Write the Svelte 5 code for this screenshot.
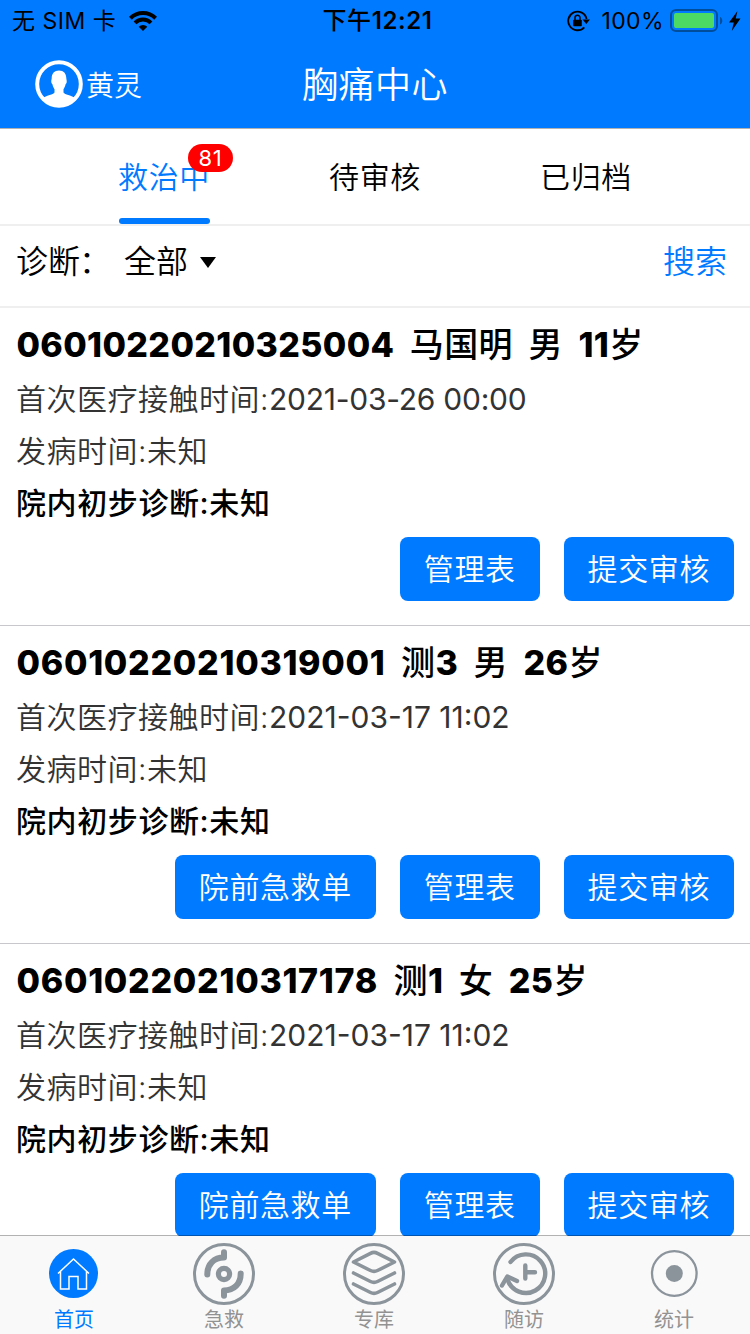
<script lang="ts">
    type Patient = {
        id: string;
        idSpacing: number;
        name: string;
        sex: string;
        age: number;
        contactTime: string;
        timeSpacing: number;
        actions: string[];
    };

    const tabs = ["救治中", "待审核", "已归档"];
    const navItems = [
        { key: "home", label: "首页" },
        { key: "rescue", label: "急救" },
        { key: "library", label: "专库" },
        { key: "visit", label: "随访" },
        { key: "stats", label: "统计" }
    ];
    const patients: Patient[] = [
        {
            id: "06010220210325004", name: "马国明", sex: "男", age: 11,
            contactTime: "2021-03-26 00:00", idSpacing: 0.35, timeSpacing: -0.25,
            actions: ["管理表", "提交审核"]
        },
        {
            id: "06010220210319001", name: "测3", sex: "男", age: 26,
            contactTime: "2021-03-17 11:02", idSpacing: 0.7, timeSpacing: 0,
            actions: ["院前急救单", "管理表", "提交审核"]
        },
        {
            id: "06010220210317178", name: "测1", sex: "女", age: 25,
            contactTime: "2021-03-17 11:02", idSpacing: 0.7, timeSpacing: 0,
            actions: ["院前急救单", "管理表", "提交审核"]
        }
    ];

    let activeTab = $state(0);
    let activeNav = $state("home");
</script>

<div class="app">
    <header>
        <div class="status">
            <div class="status-left">
                <span class="carrier">无 SIM 卡</span>
                <svg width="28" height="20" viewBox="0 0 28 20" fill="none" stroke="#000" stroke-width="4">
                    <path d="M1.4 7.2A18 18 0 0 1 26.6 7.2" />
                    <path d="M6 11.9A11.4 11.4 0 0 1 22 11.9" />
                    <path d="M14 20L9.7 15.8A6.2 6.2 0 0 1 18.3 15.8Z" fill="#000" stroke="none" />
                </svg>
            </div>
            <span class="clock">下午<b>12:21</b></span>
            <div class="status-right">
                <svg width="24" height="22" viewBox="0 0 24 22">
                    <path d="M17.3 17.3A9.3 9.3 0 1 1 19.6 9" fill="none" stroke="#000" stroke-width="1.8" />
                    <path d="M15.5 9.5H23L19.3 14Z" />
                    <rect x="6.2" y="9.8" width="8.6" height="6.4" rx="0.8" />
                    <path d="M8 10V7.8a2.5 2.5 0 0 1 5 0V10" fill="none" stroke="#000" stroke-width="1.5" />
                </svg>
                <span class="percent">100%</span>
                <svg width="54" height="24" viewBox="0 0 54 24">
                    <rect x="1" y="1" width="46" height="21" rx="5" fill="none" stroke="#004d9b" stroke-width="2" />
                    <rect x="4" y="4" width="40" height="15" rx="2" fill="#4cd964" />
                    <path d="M50 8c3 .8 3 6.6 0 7.4z" fill="#004d9b" />
                </svg>
                <svg class="bolt" width="12" height="20" viewBox="0 0 12 20">
                    <path d="M8.5 0L0 11.5H4.8L2.8 20L11.5 7.5H6.7Z" />
                </svg>
            </div>
        </div>
        <div class="titlebar">
            <div class="user">
                <svg width="48" height="48" viewBox="0 0 48 48">
                    <circle cx="24" cy="24" r="21.8" fill="none" stroke="#fff" stroke-width="4" />
                    <path fill="#fff" d="M24 10.5c4.6 0 7.3 3 7.3 7.5 0 1.5.6 2 .4 4-.1 1.4-.9 1.8-1.2 2.6-.4 2-1.2 3.4-2 4.6v3.3c1.4 2.2 7.5 2.6 11.5 5.3C36.5 43 30.5 46 24 46S11.5 43 8 37.8c4-2.7 10.1-3.1 11.5-5.3v-3.3c-.8-1.2-1.6-2.6-2-4.6-.3-.8-1.1-1.2-1.2-2.6-.2-2 .4-2.5.4-4 0-4.5 2.7-7.5 7.3-7.5z" />
                </svg>
                <span>黄灵</span>
            </div>
            <h1>胸痛中心</h1>
        </div>
    </header>

    <div class="tabs">
        {#each tabs as tab, i}
            <button class="tab" class:active={activeTab === i} onclick={() => activeTab = i}>
                {tab}
                {#if i === 0}
                    <span class="badge">81</span>
                {/if}
            </button>
        {/each}
    </div>

    <div class="filter">
        <span class="filter-label">诊断<span class="colon">：</span></span>
        <span class="filter-value">全部</span>
        <svg width="16" height="11" viewBox="0 0 16 11"><path d="M0 0H16L8 11Z" /></svg>
        <span class="search">搜索</span>
    </div>

    <main>
        {#each patients as patient}
            <section class="card">
                <h2>
                    <b style="letter-spacing: {patient.idSpacing}px">{patient.id}</b>
                    <span>{patient.name.replace(/\d/g, "")}<b>{patient.name.replace(/\D/g, "")}</b></span>
                    <span>{patient.sex}</span>
                    <span><b>{patient.age}</b>岁</span>
                </h2>
                <p>首次医疗接触时间:<span class="time" style="letter-spacing: {patient.timeSpacing}px">{patient.contactTime}</span></p>
                <p>发病时间:未知</p>
                <p class="diagnosis">院内初步诊断:未知</p>
                <div class="actions">
                    {#each patient.actions as action}
                        <button>{action}</button>
                    {/each}
                </div>
            </section>
        {/each}
    </main>

    <nav>
        {#each navItems as item}
            <button class="nav-item" class:active={activeNav === item.key} onclick={() => activeNav = item.key}>
                <svg width="64" height="64" viewBox="0 0 64 64" fill="none" stroke="#8b939b" stroke-linecap="round" stroke-linejoin="round">
                    {#if item.key === "home"}
                        <circle cx="31.5" cy="31.5" r="24.5" fill="#007aff" stroke="none" />
                        <path d="M16 31.5L31.5 17L47 31.5M18.5 29.5V47H27V34.5H36V47H44.5V29.5" stroke="#fff" stroke-width="1.5" stroke-linecap="butt" stroke-linejoin="miter" />
                    {:else if item.key === "rescue"}
                        <circle cx="32" cy="32" r="29.5" stroke-width="3" />
                        <circle cx="32" cy="32" r="5.6" stroke-width="5.2" />
                        <path d="M15.3 32.5C15.3 22 22 15.5 32 15.5V10.3M48.7 31.5C48.7 42 42 48.5 32 48.5V53.7" stroke-width="6" />
                    {:else if item.key === "library"}
                        <circle cx="32" cy="32" r="29.5" stroke-width="3" />
                        <path d="M11.5 20L28.5 11.3Q32 9.5 35.5 11.3L52.5 20L35.5 28.5Q32 30.3 28.5 28.5ZM11.5 31L28.5 39.5Q32 41.3 35.5 39.5L52.5 31M11.5 42L28.5 50.5Q32 52.3 35.5 50.5L52.5 42" stroke-width="3.6" />
                    {:else if item.key === "visit"}
                        <circle cx="32" cy="32" r="29.5" stroke-width="3" />
                        <path d="M18.5 20A19.3 19.3 0 1 1 15.5 37.5" stroke-width="4.4" />
                        <path d="M10 43.5L15.3 34.5L25 39M33.3 23.5V36.5M33.3 30.3H43" stroke-width="4.4" />
                    {:else}
                        <circle cx="32.3" cy="31.5" r="22.3" stroke-width="2.3" />
                        <circle cx="32.3" cy="31.5" r="8.5" fill="#8b939b" stroke="none" />
                    {/if}
                </svg>
                <span>{item.label}</span>
            </button>
        {/each}
    </nav>
</div>

<style>
    :global(body) {
        margin: 0;
        background-color: #fff;
    }

    .app {
        display: flex;
        flex-direction: column;
        width: 750px;
        height: 1334px;
        overflow: hidden;
        color: #000;
        font-family: Inter, "Noto Sans CJK SC", sans-serif;
        font-weight: 350;
    }

    button {
        margin: 0;
        padding: 0;
        border: none;
        background: none;
        font: inherit;
        letter-spacing: inherit;
        color: inherit;
    }

    svg {
        flex: none;
    }

    header {
        flex: none;
        box-sizing: border-box;
        height: 129px;
        background-color: #007aff;
        border-bottom: 1px solid #b2b2b2;
    }

    .status {
        display: grid;
        grid-template-columns: 1fr auto 1fr;
        align-items: center;
        height: 40px;
        padding: 0 9px 0 12px;
        font-size: 23px;
        font-weight: 400;
        line-height: 42px;
    }

    .status-left, .status-right {
        display: flex;
        align-items: center;
    }

    .status-left {
        gap: 13px;
    }

    .carrier {
        letter-spacing: 0.5px;
    }

    .status-right {
        justify-content: flex-end;
    }

    .clock {
        padding-left: 2px;
        font-size: 24px;
        font-weight: 500;
        letter-spacing: 0.6px;
    }

    .clock b {
        font-weight: 600;
    }

    .percent {
        margin: 0 6px 0 10px;
        letter-spacing: 0.4px;
    }

    .bolt {
        margin-left: 5px;
    }

    .titlebar {
        display: grid;
        grid-template-columns: 1fr auto 1fr;
        align-items: center;
        height: 88px;
        padding: 0 35px;
        color: #fff;
    }

    .user {
        display: flex;
        align-items: center;
        gap: 3px;
        font-size: 28px;
    }

    h1 {
        margin: 2px 0 0;
        font-size: 36px;
        font-weight: 350;
        line-height: 50px;
        letter-spacing: 0.5px;
    }

    .tabs {
        flex: none;
        display: flex;
        justify-content: center;
        gap: 119px;
        height: 95px;
        border-bottom: 2px solid #efeff0;
        font-size: 30px;
        letter-spacing: 0.6px;
    }

    .tab {
        position: relative;
        width: 92px;
        line-height: 96px;
        white-space: nowrap;
    }

    .tab.active {
        color: #007aff;
    }

    .tab.active::after {
        content: "";
        position: absolute;
        left: 0.5px;
        bottom: 0;
        width: 91.5px;
        height: 6px;
        border-radius: 3px;
        background-color: #007aff;
    }

    .badge {
        position: absolute;
        top: 15px;
        left: 70px;
        width: 45px;
        height: 28px;
        border-radius: 14px;
        background-color: #f00;
        color: #fff;
        font-size: 22px;
        font-weight: 400;
        line-height: 28px;
        text-align: center;
    }

    .filter {
        flex: none;
        display: flex;
        align-items: center;
        height: 80px;
        padding: 0 23px 0 16px;
        border-bottom: 2px solid #efeff0;
        font-size: 32px;
        line-height: 72px;
    }

    .filter > * {
        margin-bottom: 8px;
    }

    .filter-label {
        width: 108px;
        white-space: nowrap;
    }

    .colon {
        margin-left: -1px;
    }

    .filter-value {
        margin-right: 12px;
    }

    .search {
        margin-left: auto;
        color: #007aff;
    }

    main {
        flex: 1;
        min-height: 0;
        margin-bottom: -1px;
        overflow: hidden;
    }

    .card {
        box-sizing: border-box;
        height: 318px;
        padding: 11px 16px 24px;
        border-bottom: 1px solid #c8c7cc;
    }

    h2 {
        display: flex;
        gap: 15.5px;
        margin: 0 0 2px 0.5px;
        font-size: 34px;
        font-weight: 500;
        line-height: 52px;
        letter-spacing: 0.4px;
    }

    h2 b {
        font-weight: 800;
    }

    p {
        margin: 0;
        color: #333;
        font-size: 30px;
        line-height: 52px;
        letter-spacing: 0.5px;
    }

    .time {
        font-weight: 400;
    }

    .diagnosis {
        color: #000;
        font-weight: 500;
        letter-spacing: 0.6px;
    }

    .actions {
        display: flex;
        justify-content: flex-end;
        gap: 24px;
        margin-top: 8px;
    }

    .actions button {
        height: 64px;
        padding: 0 24px;
        border-radius: 8px;
        background-color: #007aff;
        color: #fff;
        font-size: 30px;
        line-height: 64px;
        letter-spacing: 0.6px;
    }

    nav {
        position: relative;
        flex: none;
        display: flex;
        box-sizing: border-box;
        width: 751px;
        height: 99px;
        margin-left: -1px;
        border-top: 1px solid rgba(0, 0, 0, 0.3);
        background-color: #f9f9f9;
        background-clip: padding-box;
    }

    .nav-item {
        flex: none;
        display: flex;
        flex-direction: column;
        align-items: center;
        width: 150px;
        padding-top: 6px;
        color: #929292;
        font-size: 20px;
        font-weight: 400;
        line-height: 28px;
    }

    .nav-item.active {
        color: #007aff;
    }
</style>
